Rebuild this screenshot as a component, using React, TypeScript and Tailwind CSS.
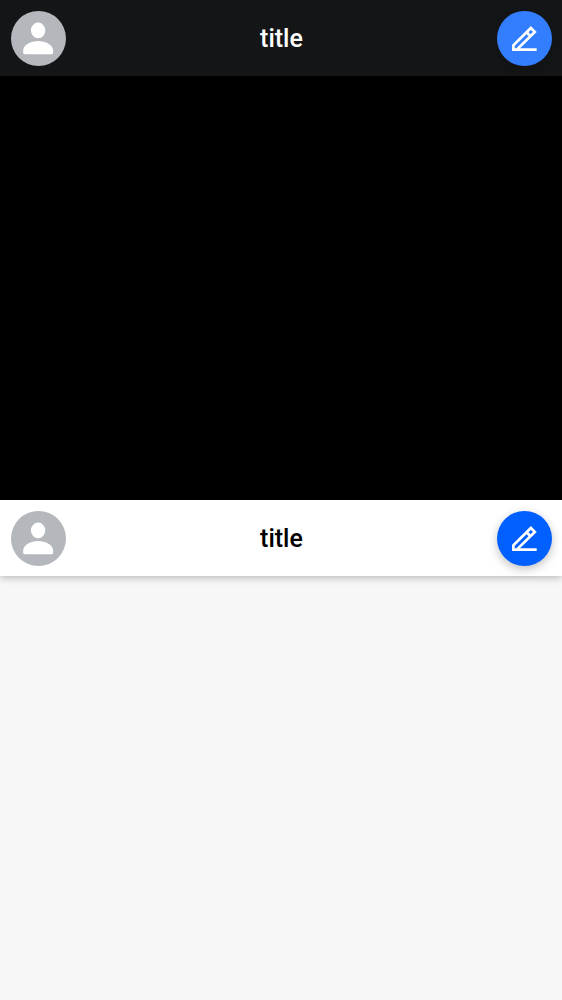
type Theme = "dark" | "light";

const themes = {
  dark: {
    page: "bg-black",
    bar: "bg-[#141517] text-white",
    action: "bg-[#337eff] shadow-[0_3px_8px_rgba(0,0,0,0.15)]",
  },
  light: {
    page: "bg-[#f7f7f7]",
    bar: "bg-white text-black shadow-[0_1px_8px_rgba(0,0,0,0.3)]",
    action: "bg-[#005fff] shadow-[0_3px_10px_rgba(0,0,0,0.25)]",
  },
};

function AvatarIcon() {
  return (
    <svg viewBox="0 0 55 55" className="size-full" fill="white" aria-hidden="true">
      <ellipse cx="27.1" cy="19.4" rx="7.2" ry="7.8" />
      <path d="M12.2 39.5C12.2 34 19.5 30 27.1 30S42.1 34 42.1 39.5V41.8Q42.1 43.3 40.6 43.3H13.7Q12.2 43.3 12.2 41.8Z" />
    </svg>
  );
}

function PenIcon() {
  return (
    <svg
      viewBox="0 0 55 55"
      className="size-full"
      fill="none"
      stroke="white"
      strokeWidth="2.7"
      aria-hidden="true"
    >
      <path d="M39.7 38.6H16.4V34.2L33.9 17L37.8 20.9L20 38.4" />
      <path d="M29.5 21.3L33.5 25.3" />
    </svg>
  );
}

function Screen({ theme }: { theme: Theme }) {
  const t = themes[theme];
  return (
    <section className={`min-h-[50vh] overflow-hidden ${t.page}`}>
      <header className={`flex items-center justify-between pt-[11px] pr-[10px] pb-[10px] pl-[11px] ${t.bar}`}>
        <button
          type="button"
          aria-label="Profile"
          className="size-[55px] overflow-hidden rounded-full bg-[#b4b7bb]"
        >
          <AvatarIcon />
        </button>
        <h1 className="text-[25px] leading-8 font-medium">title</h1>
        <button type="button" aria-label="New message" className={`size-[55px] rounded-full ${t.action}`}>
          <PenIcon />
        </button>
      </header>
    </section>
  );
}

export default function App() {
  return (
    <main className="min-h-screen font-[Roboto,sans-serif]">
      <Screen theme="dark" />
      <Screen theme="light" />
    </main>
  );
}
